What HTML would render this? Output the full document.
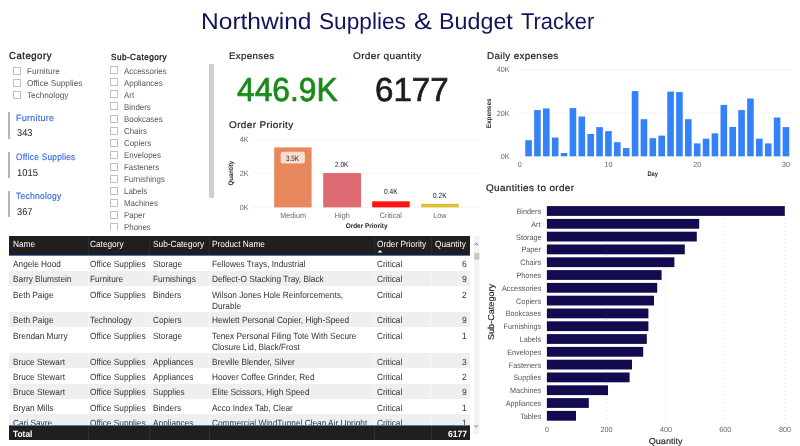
<!DOCTYPE html>
<html lang="en"><head><meta charset="utf-8"><title>Northwind Supplies &amp; Budget Tracker</title>
<style>
html,body{margin:0;padding:0;background:#fff}
body{font-family:"Liberation Sans",sans-serif;text-rendering:geometricPrecision}
#page{filter:blur(0.3px);position:relative;width:800px;height:446px;overflow:hidden;background:#fff}
.t{position:absolute;white-space:pre;line-height:1;transform-origin:0 0;margin:0;font-weight:400}
h1,h2,h3{margin:0;font-weight:400;font-size:inherit}
.cb{position:absolute;width:6px;height:6px;border:1px solid #c2c0be;background:#fff;box-sizing:content-box}
.m{-webkit-text-stroke:0.2px currentColor}
.b{-webkit-text-stroke:0.35px currentColor}
.big{-webkit-text-stroke:0.7px currentColor}
.bar{position:absolute;width:1.6px;background:#b7b4b1}
.clip{position:absolute;overflow:hidden}
svg{position:absolute;left:0;top:0;overflow:visible}
svg text{font-family:"Liberation Sans",sans-serif;text-rendering:geometricPrecision}
.row{position:absolute;left:9px;width:461px}
.alt{background:#efefef}
</style></head><body><div id="page">
<h1><span class="t" style="left:201.13px;top:10px;font-size:23px;transform:scaleX(1.0673);color:#14145a">Northwind</span> <span class="t" style="left:318.52px;top:10px;font-size:23px;transform:scaleX(0.9847);color:#14145a">Supplies</span> <span class="t" style="left:414.20px;top:10px;font-size:23px;transform:scaleX(1.1667);color:#14145a">&amp;</span> <span class="t" style="left:438.69px;top:10px;font-size:23px;transform:scaleX(1.0123);color:#14145a">Budget</span> <span class="t" style="left:521.00px;top:10px;font-size:23px;transform:scaleX(0.9504);color:#14145a">Tracker</span></h1>
<section class="slicer"><span class="t b" style="left:8.60px;top:52px;font-size:10px;transform:scaleX(0.9544);letter-spacing:0.55px;color:#252423">Category</span><i class="cb" style="left:13.3px;top:66.70px"></i><span class="t" style="left:27.00px;top:67px;font-size:8.5px;transform:scaleX(0.9654);color:#575553">Furniture</span>
<i class="cb" style="left:13.3px;top:78.70px"></i><span class="t" style="left:27.00px;top:79px;font-size:8.5px;transform:scaleX(0.9707);color:#575553">Office Supplies</span>
<i class="cb" style="left:13.3px;top:90.70px"></i><span class="t" style="left:27.00px;top:91px;font-size:8.5px;transform:scaleX(0.9622);color:#575553">Technology</span>
</section>
<section class="cards"><i class="bar" style="left:8.1px;top:112.4px;height:26.4px"></i><span class="t m" style="left:16.30px;top:114px;font-size:9.2px;transform:scaleX(0.9705);letter-spacing:0.3px;color:#3b6fe3">Furniture</span> <span class="t" style="left:16.50px;top:129px;font-size:10px;transform:scaleX(0.9227);color:#252423">343</span>
<i class="bar" style="left:8.1px;top:151.7px;height:26.4px"></i><span class="t m" style="left:16.30px;top:153px;font-size:9.2px;transform:scaleX(0.8999);letter-spacing:0.3px;color:#3b6fe3">Office Supplies</span> <span class="t" style="left:16.50px;top:169px;font-size:10px;transform:scaleX(0.9434);color:#252423">1015</span>
<i class="bar" style="left:8.1px;top:190.9px;height:26.4px"></i><span class="t m" style="left:16.30px;top:192px;font-size:9.2px;transform:scaleX(0.9196);letter-spacing:0.3px;color:#3b6fe3">Technology</span> <span class="t" style="left:16.50px;top:208px;font-size:10px;transform:scaleX(0.9227);color:#252423">367</span>
</section>
<section class="slicer"><span class="t b" style="left:110.80px;top:53px;font-size:8.8px;transform:scaleX(0.9292);letter-spacing:0.5px;color:#252423">Sub-Category</span><div class="clip" style="left:100px;top:62px;width:108px;height:167.6px"><div style="position:absolute;left:-100px;top:-62px"><i class="cb" style="left:110.2px;top:66.40px"></i><span class="t" style="left:124.20px;top:67px;font-size:8.5px;transform:scaleX(0.9300);color:#575553">Accessories</span>
<i class="cb" style="left:110.2px;top:78.43px"></i><span class="t" style="left:124.20px;top:79px;font-size:8.5px;transform:scaleX(0.9300);color:#575553">Appliances</span>
<i class="cb" style="left:110.2px;top:90.46px"></i><span class="t" style="left:124.20px;top:91px;font-size:8.5px;transform:scaleX(0.9300);color:#575553">Art</span>
<i class="cb" style="left:110.2px;top:102.49px"></i><span class="t" style="left:124.20px;top:103px;font-size:8.5px;transform:scaleX(0.9300);color:#575553">Binders</span>
<i class="cb" style="left:110.2px;top:114.52px"></i><span class="t" style="left:124.20px;top:115px;font-size:8.5px;transform:scaleX(0.9300);color:#575553">Bookcases</span>
<i class="cb" style="left:110.2px;top:126.55px"></i><span class="t" style="left:124.20px;top:127px;font-size:8.5px;transform:scaleX(0.9300);color:#575553">Chairs</span>
<i class="cb" style="left:110.2px;top:138.58px"></i><span class="t" style="left:124.20px;top:139px;font-size:8.5px;transform:scaleX(0.9300);color:#575553">Copiers</span>
<i class="cb" style="left:110.2px;top:150.61px"></i><span class="t" style="left:124.20px;top:151px;font-size:8.5px;transform:scaleX(0.9300);color:#575553">Envelopes</span>
<i class="cb" style="left:110.2px;top:162.64px"></i><span class="t" style="left:124.20px;top:163px;font-size:8.5px;transform:scaleX(0.9300);color:#575553">Fasteners</span>
<i class="cb" style="left:110.2px;top:174.67px"></i><span class="t" style="left:124.20px;top:175px;font-size:8.5px;transform:scaleX(0.9300);color:#575553">Furnishings</span>
<i class="cb" style="left:110.2px;top:186.70px"></i><span class="t" style="left:124.20px;top:187px;font-size:8.5px;transform:scaleX(0.9300);color:#575553">Labels</span>
<i class="cb" style="left:110.2px;top:198.73px"></i><span class="t" style="left:124.20px;top:199px;font-size:8.5px;transform:scaleX(0.9300);color:#575553">Machines</span>
<i class="cb" style="left:110.2px;top:210.76px"></i><span class="t" style="left:124.20px;top:211px;font-size:8.5px;transform:scaleX(0.9300);color:#575553">Paper</span>
<i class="cb" style="left:110.2px;top:222.79px"></i><span class="t" style="left:124.20px;top:223px;font-size:8.5px;transform:scaleX(0.9300);color:#575553">Phones</span>
</div></div><i style="position:absolute;left:209.2px;top:63.5px;width:4.5px;height:134px;background:#d2d0ce"></i></section>
<section class="kpi"><span class="t m" style="left:228.70px;top:52px;font-size:9.5px;transform:scaleX(1.0221);letter-spacing:0.35px;color:#252423">Expenses</span>
<span class="t big" style="left:237.40px;top:74px;font-size:33.2px;transform:scaleX(0.9567);color:#188a18">446.9K</span>
<span class="t m" style="left:352.80px;top:52px;font-size:9.5px;transform:scaleX(1.0524);letter-spacing:0.35px;color:#252423">Order quantity</span>
<span class="t big" style="left:375.20px;top:74px;font-size:33.2px;transform:scaleX(0.9976);color:#1c1c1c">6177</span>
<span class="t m" style="left:228.70px;top:121px;font-size:9.7px;transform:scaleX(1.0321);letter-spacing:0.35px;color:#252423">Order Priority</span>
<span class="t m" style="left:486.50px;top:52px;font-size:9.7px;transform:scaleX(1.0128);letter-spacing:0.35px;color:#252423">Daily expenses</span>
<span class="t m" style="left:486.00px;top:184px;font-size:9.7px;transform:scaleX(1.0234);letter-spacing:0.35px;color:#252423">Quantities to order</span></section>
<svg width="800" height="446" viewBox="0 0 800 446">
<g class="order-priority">
<line x1="253.8" x2="480" y1="139.4" y2="139.4" stroke="#d4d4d4" stroke-width="0.9" stroke-dasharray="0.9 3.1"/>
<line x1="253.8" x2="480" y1="173.2" y2="173.2" stroke="#d4d4d4" stroke-width="0.9" stroke-dasharray="0.9 3.1"/>
<line x1="253.8" x2="480" y1="207.3" y2="207.3" stroke="#d4d4d4" stroke-width="0.9" stroke-dasharray="0.9 3.1"/>
<rect x="274.2" y="147.4" width="37.4" height="60.0" fill="#e8875c"/>
<rect x="323.2" y="173.0" width="37.8" height="34.4" fill="#de6a73"/>
<rect x="372.2" y="201.3" width="37.5" height="6.1" fill="#fd1414"/>
<rect x="421.2" y="203.8" width="37.6" height="3.6" fill="#dfc233"/>
<rect x="280.7" y="151.8" width="24.2" height="11.7" rx="2" fill="#fff" fill-opacity="0.72"/>
<text x="239.64" y="142" font-size="7.6" fill="#6a6866" textLength="8.82" lengthAdjust="spacingAndGlyphs">4K</text>
<text x="239.64" y="176" font-size="7.6" fill="#6a6866" textLength="8.82" lengthAdjust="spacingAndGlyphs">2K</text>
<text x="239.64" y="210" font-size="7.6" fill="#6a6866" textLength="8.82" lengthAdjust="spacingAndGlyphs">0K</text>
<text x="280.24" y="218" font-size="7.8" fill="#6a6866" textLength="25.79" lengthAdjust="spacingAndGlyphs">Medium</text>
<text x="334.80" y="218" font-size="7.8" fill="#6a6866" textLength="14.91" lengthAdjust="spacingAndGlyphs">High</text>
<text x="379.75" y="218" font-size="7.8" fill="#6a6866" textLength="22.16" lengthAdjust="spacingAndGlyphs">Critical</text>
<text x="433.18" y="218" font-size="7.8" fill="#6a6866" textLength="13.30" lengthAdjust="spacingAndGlyphs">Low</text>
<text x="286.00" y="161" font-size="7.7" fill="#252423" textLength="13.08" lengthAdjust="spacingAndGlyphs">3.5K</text>
<text x="335.10" y="167" font-size="7.7" fill="#252423" textLength="13.17" lengthAdjust="spacingAndGlyphs">2.0K</text>
<text x="384.00" y="194" font-size="7.7" fill="#252423" textLength="13.55" lengthAdjust="spacingAndGlyphs">0.4K</text>
<text x="433.10" y="198" font-size="7.7" fill="#252423" textLength="13.46" lengthAdjust="spacingAndGlyphs">0.2K</text>
<text x="345.70" y="228" font-size="6.8" fill="#252423" textLength="41.79" lengthAdjust="spacingAndGlyphs" font-weight="700">Order Priority</text>
<text transform="translate(233 185.50) rotate(-90)" font-size="6.6" fill="#252423" textLength="24.69" lengthAdjust="spacingAndGlyphs" font-weight="700">Quantity</text>
</g>
<g class="daily-expenses">
<line x1="516.6" x2="790" y1="69.9" y2="69.9" stroke="#d4d4d4" stroke-width="0.9" stroke-dasharray="0.9 3.1"/>
<line x1="516.6" x2="790" y1="113.0" y2="113.0" stroke="#d4d4d4" stroke-width="0.9" stroke-dasharray="0.9 3.1"/>
<line x1="516.6" x2="790" y1="156.3" y2="156.3" stroke="#d4d4d4" stroke-width="0.9" stroke-dasharray="0.9 3.1"/>
<rect x="525.25" y="140.2" width="6.6" height="16.1" fill="#3482f8"/>
<rect x="534.13" y="110.1" width="6.6" height="46.2" fill="#3482f8"/>
<rect x="543.00" y="108.4" width="6.6" height="47.9" fill="#3482f8"/>
<rect x="551.88" y="137.5" width="6.6" height="18.8" fill="#3482f8"/>
<rect x="560.75" y="153.0" width="6.6" height="3.3" fill="#3482f8"/>
<rect x="569.63" y="108.1" width="6.6" height="48.2" fill="#3482f8"/>
<rect x="578.51" y="116.5" width="6.6" height="39.8" fill="#3482f8"/>
<rect x="587.38" y="134.0" width="6.6" height="22.3" fill="#3482f8"/>
<rect x="596.26" y="127.1" width="6.6" height="29.2" fill="#3482f8"/>
<rect x="605.13" y="131.1" width="6.6" height="25.2" fill="#3482f8"/>
<rect x="614.01" y="142.2" width="6.6" height="14.1" fill="#3482f8"/>
<rect x="622.89" y="148.1" width="6.6" height="8.2" fill="#3482f8"/>
<rect x="631.76" y="91.1" width="6.6" height="65.2" fill="#3482f8"/>
<rect x="640.64" y="119.2" width="6.6" height="37.1" fill="#3482f8"/>
<rect x="649.51" y="138.2" width="6.6" height="18.1" fill="#3482f8"/>
<rect x="658.39" y="135.6" width="6.6" height="20.7" fill="#3482f8"/>
<rect x="667.27" y="91.6" width="6.6" height="64.7" fill="#3482f8"/>
<rect x="676.14" y="92.1" width="6.6" height="64.2" fill="#3482f8"/>
<rect x="685.02" y="119.2" width="6.6" height="37.1" fill="#3482f8"/>
<rect x="693.89" y="143.4" width="6.6" height="12.9" fill="#3482f8"/>
<rect x="702.77" y="138.7" width="6.6" height="17.6" fill="#3482f8"/>
<rect x="711.65" y="133.3" width="6.6" height="23.0" fill="#3482f8"/>
<rect x="720.52" y="104.9" width="6.6" height="51.4" fill="#3482f8"/>
<rect x="729.40" y="126.9" width="6.6" height="29.4" fill="#3482f8"/>
<rect x="738.27" y="110.1" width="6.6" height="46.2" fill="#3482f8"/>
<rect x="747.15" y="98.5" width="6.6" height="57.8" fill="#3482f8"/>
<rect x="756.03" y="138.7" width="6.6" height="17.6" fill="#3482f8"/>
<rect x="764.90" y="143.4" width="6.6" height="12.9" fill="#3482f8"/>
<rect x="773.78" y="117.5" width="6.6" height="38.8" fill="#3482f8"/>
<rect x="782.65" y="127.1" width="6.6" height="29.2" fill="#3482f8"/>
<text x="496.83" y="72" font-size="7.6" fill="#6a6866" textLength="12.84" lengthAdjust="spacingAndGlyphs">40K</text>
<text x="496.83" y="116" font-size="7.6" fill="#6a6866" textLength="12.84" lengthAdjust="spacingAndGlyphs">20K</text>
<text x="500.84" y="159" font-size="7.6" fill="#6a6866" textLength="8.82" lengthAdjust="spacingAndGlyphs">0K</text>
<text x="517.70" y="167" font-size="7.6" fill="#6a6866" textLength="4.01" lengthAdjust="spacingAndGlyphs">0</text>
<text x="604.49" y="167" font-size="7.6" fill="#6a6866" textLength="8.02" lengthAdjust="spacingAndGlyphs">10</text>
<text x="693.29" y="167" font-size="7.6" fill="#6a6866" textLength="8.02" lengthAdjust="spacingAndGlyphs">20</text>
<text x="782.09" y="167" font-size="7.6" fill="#6a6866" textLength="8.02" lengthAdjust="spacingAndGlyphs">30</text>
<text x="647.55" y="176" font-size="6.8" fill="#252423" textLength="10.32" lengthAdjust="spacingAndGlyphs" font-weight="700">Day</text>
<text transform="translate(491 128.20) rotate(-90)" font-size="6.6" fill="#252423" textLength="29.68" lengthAdjust="spacingAndGlyphs" font-weight="700">Expenses</text>
</g>
<g class="quantities">
<line x1="547" x2="547" y1="203" y2="424" stroke="#d4d4d4" stroke-width="0.9" stroke-dasharray="0.9 3.1"/>
<line x1="606.4" x2="606.4" y1="203" y2="424" stroke="#d4d4d4" stroke-width="0.9" stroke-dasharray="0.9 3.1"/>
<line x1="666" x2="666" y1="203" y2="424" stroke="#d4d4d4" stroke-width="0.9" stroke-dasharray="0.9 3.1"/>
<line x1="725.2" x2="725.2" y1="203" y2="424" stroke="#d4d4d4" stroke-width="0.9" stroke-dasharray="0.9 3.1"/>
<line x1="784.8" x2="784.8" y1="203" y2="424" stroke="#d4d4d4" stroke-width="0.9" stroke-dasharray="0.9 3.1"/>
<rect x="546.9" y="206.10" width="237.9" height="9.8" fill="#120b50"/>
<rect x="546.9" y="218.90" width="152.3" height="9.8" fill="#120b50"/>
<rect x="546.9" y="231.70" width="149.9" height="9.8" fill="#120b50"/>
<rect x="546.9" y="244.50" width="137.9" height="9.8" fill="#120b50"/>
<rect x="546.9" y="257.30" width="127.5" height="9.8" fill="#120b50"/>
<rect x="546.9" y="270.10" width="114.7" height="9.8" fill="#120b50"/>
<rect x="546.9" y="282.90" width="110.3" height="9.8" fill="#120b50"/>
<rect x="546.9" y="295.70" width="107.1" height="9.8" fill="#120b50"/>
<rect x="546.9" y="308.50" width="101.5" height="9.8" fill="#120b50"/>
<rect x="546.9" y="321.30" width="101.5" height="9.8" fill="#120b50"/>
<rect x="546.9" y="334.10" width="99.9" height="9.8" fill="#120b50"/>
<rect x="546.9" y="346.90" width="96.3" height="9.8" fill="#120b50"/>
<rect x="546.9" y="359.70" width="85.1" height="9.8" fill="#120b50"/>
<rect x="546.9" y="372.50" width="82.7" height="9.8" fill="#120b50"/>
<rect x="546.9" y="385.30" width="61.1" height="9.8" fill="#120b50"/>
<rect x="546.9" y="398.10" width="41.9" height="9.8" fill="#120b50"/>
<rect x="546.9" y="410.90" width="29.1" height="9.8" fill="#120b50"/>
<text x="516.52" y="214" font-size="7.8" fill="#575553" textLength="24.59" lengthAdjust="spacingAndGlyphs">Binders</text>
<text x="531.16" y="227" font-size="7.8" fill="#575553" textLength="9.27" lengthAdjust="spacingAndGlyphs">Art</text>
<text x="516.12" y="240" font-size="7.8" fill="#575553" textLength="25.40" lengthAdjust="spacingAndGlyphs">Storage</text>
<text x="521.48" y="252" font-size="7.8" fill="#575553" textLength="19.35" lengthAdjust="spacingAndGlyphs">Paper</text>
<text x="520.15" y="265" font-size="7.8" fill="#575553" textLength="20.95" lengthAdjust="spacingAndGlyphs">Chairs</text>
<text x="516.51" y="278" font-size="7.8" fill="#575553" textLength="24.59" lengthAdjust="spacingAndGlyphs">Phones</text>
<text x="502.02" y="291" font-size="7.8" fill="#575553" textLength="39.09" lengthAdjust="spacingAndGlyphs">Accessories</text>
<text x="516.12" y="304" font-size="7.8" fill="#575553" textLength="24.99" lengthAdjust="spacingAndGlyphs">Copiers</text>
<text x="505.64" y="316" font-size="7.8" fill="#575553" textLength="35.47" lengthAdjust="spacingAndGlyphs">Bookcases</text>
<text x="503.62" y="329" font-size="7.8" fill="#575553" textLength="37.48" lengthAdjust="spacingAndGlyphs">Furnishings</text>
<text x="519.74" y="342" font-size="7.8" fill="#575553" textLength="21.37" lengthAdjust="spacingAndGlyphs">Labels</text>
<text x="507.24" y="355" font-size="7.8" fill="#575553" textLength="33.86" lengthAdjust="spacingAndGlyphs">Envelopes</text>
<text x="508.87" y="368" font-size="7.8" fill="#575553" textLength="32.24" lengthAdjust="spacingAndGlyphs">Fasteners</text>
<text x="513.29" y="380" font-size="7.8" fill="#575553" textLength="27.81" lengthAdjust="spacingAndGlyphs">Supplies</text>
<text x="510.07" y="393" font-size="7.8" fill="#575553" textLength="31.03" lengthAdjust="spacingAndGlyphs">Machines</text>
<text x="505.63" y="406" font-size="7.8" fill="#575553" textLength="35.47" lengthAdjust="spacingAndGlyphs">Appliances</text>
<text x="520.15" y="419" font-size="7.8" fill="#575553" textLength="20.96" lengthAdjust="spacingAndGlyphs">Tables</text>
<text x="545.10" y="432" font-size="7.6" fill="#6a6866" textLength="4.01" lengthAdjust="spacingAndGlyphs">0</text>
<text x="600.49" y="432" font-size="7.6" fill="#6a6866" textLength="12.04" lengthAdjust="spacingAndGlyphs">200</text>
<text x="660.09" y="432" font-size="7.6" fill="#6a6866" textLength="12.04" lengthAdjust="spacingAndGlyphs">400</text>
<text x="719.29" y="432" font-size="7.6" fill="#6a6866" textLength="12.04" lengthAdjust="spacingAndGlyphs">600</text>
<text x="778.89" y="432" font-size="7.6" fill="#6a6866" textLength="12.04" lengthAdjust="spacingAndGlyphs">800</text>
<text x="648.75" y="444" font-size="8.6" fill="#252423" textLength="33.76" lengthAdjust="spacingAndGlyphs" stroke="#252423" stroke-width="0.15">Quantity</text>
<text transform="translate(494 340.10) rotate(-90)" font-size="8.6" fill="#252423" textLength="56.25" lengthAdjust="spacingAndGlyphs" stroke="#252423" stroke-width="0.15">Sub-Category</text>
</g>
</svg>
<section class="table"><div class="clip" style="left:9px;top:255px;width:461px;height:169.8px"><div style="position:absolute;left:-9px;top:-255px"><div class="tr"><div class="row" style="top:255.50px;height:15.3px"></div><span class="t" style="left:12.60px;top:260px;font-size:9px;transform:scaleX(0.9200);color:#333333">Angele Hood</span> <span class="t" style="left:90.40px;top:260px;font-size:9px;transform:scaleX(0.9200);color:#333333">Office Supplies</span> <span class="t" style="left:152.60px;top:260px;font-size:9px;transform:scaleX(0.9200);color:#333333">Storage</span> <span class="t" style="left:211.60px;top:260px;font-size:9px;transform:scaleX(0.9200);color:#333333">Fellowes Trays, Industrial</span> <span class="t" style="left:377.00px;top:260px;font-size:9px;transform:scaleX(0.9200);color:#333333">Critical</span> <span class="t" style="left:462.25px;top:260px;font-size:9px;transform:scaleX(0.9500);color:#333333">6</span></div>
<div class="tr"><div class="row alt" style="top:270.80px;height:15.3px"></div><span class="t" style="left:12.60px;top:275px;font-size:9px;transform:scaleX(0.9200);color:#333333">Barry Blumstein</span> <span class="t" style="left:90.40px;top:275px;font-size:9px;transform:scaleX(0.9200);color:#333333">Furniture</span> <span class="t" style="left:152.60px;top:275px;font-size:9px;transform:scaleX(0.9200);color:#333333">Furnishings</span> <span class="t" style="left:211.60px;top:275px;font-size:9px;transform:scaleX(0.9200);color:#333333">Deflect-O Stacking Tray, Black</span> <span class="t" style="left:377.00px;top:275px;font-size:9px;transform:scaleX(0.9200);color:#333333">Critical</span> <span class="t" style="left:462.25px;top:275px;font-size:9px;transform:scaleX(0.9500);color:#333333">9</span></div>
<div class="tr"><div class="row" style="top:286.10px;height:25.85px"></div><span class="t" style="left:12.60px;top:291px;font-size:9px;transform:scaleX(0.9200);color:#333333">Beth Paige</span> <span class="t" style="left:90.40px;top:291px;font-size:9px;transform:scaleX(0.9200);color:#333333">Office Supplies</span> <span class="t" style="left:152.60px;top:291px;font-size:9px;transform:scaleX(0.9200);color:#333333">Binders</span> <span class="t" style="left:211.60px;top:291px;font-size:9px;transform:scaleX(0.9200);color:#333333">Wilson Jones Hole Reinforcements,</span> <span class="t" style="left:211.60px;top:302px;font-size:9px;transform:scaleX(0.9200);color:#333333">Durable</span> <span class="t" style="left:377.00px;top:291px;font-size:9px;transform:scaleX(0.9200);color:#333333">Critical</span> <span class="t" style="left:462.25px;top:291px;font-size:9px;transform:scaleX(0.9500);color:#333333">2</span></div>
<div class="tr"><div class="row alt" style="top:311.95px;height:15.3px"></div><span class="t" style="left:12.60px;top:316px;font-size:9px;transform:scaleX(0.9200);color:#333333">Beth Paige</span> <span class="t" style="left:90.40px;top:316px;font-size:9px;transform:scaleX(0.9200);color:#333333">Technology</span> <span class="t" style="left:152.60px;top:316px;font-size:9px;transform:scaleX(0.9200);color:#333333">Copiers</span> <span class="t" style="left:211.60px;top:316px;font-size:9px;transform:scaleX(0.9200);color:#333333">Hewlett Personal Copier, High-Speed</span> <span class="t" style="left:377.00px;top:316px;font-size:9px;transform:scaleX(0.9200);color:#333333">Critical</span> <span class="t" style="left:462.25px;top:316px;font-size:9px;transform:scaleX(0.9500);color:#333333">9</span></div>
<div class="tr"><div class="row" style="top:327.25px;height:25.85px"></div><span class="t" style="left:12.60px;top:332px;font-size:9px;transform:scaleX(0.9200);color:#333333">Brendan Murry</span> <span class="t" style="left:90.40px;top:332px;font-size:9px;transform:scaleX(0.9200);color:#333333">Office Supplies</span> <span class="t" style="left:152.60px;top:332px;font-size:9px;transform:scaleX(0.9200);color:#333333">Storage</span> <span class="t" style="left:211.60px;top:332px;font-size:9px;transform:scaleX(0.9200);color:#333333">Tenex Personal Filing Tote With Secure</span> <span class="t" style="left:211.60px;top:343px;font-size:9px;transform:scaleX(0.9200);color:#333333">Closure Lid, Black/Frost</span> <span class="t" style="left:377.00px;top:332px;font-size:9px;transform:scaleX(0.9200);color:#333333">Critical</span> <span class="t" style="left:462.25px;top:332px;font-size:9px;transform:scaleX(0.9500);color:#333333">1</span></div>
<div class="tr"><div class="row alt" style="top:353.10px;height:15.3px"></div><span class="t" style="left:12.60px;top:358px;font-size:9px;transform:scaleX(0.9200);color:#333333">Bruce Stewart</span> <span class="t" style="left:90.40px;top:358px;font-size:9px;transform:scaleX(0.9200);color:#333333">Office Supplies</span> <span class="t" style="left:152.60px;top:358px;font-size:9px;transform:scaleX(0.9200);color:#333333">Appliances</span> <span class="t" style="left:211.60px;top:358px;font-size:9px;transform:scaleX(0.9200);color:#333333">Breville Blender, Silver</span> <span class="t" style="left:377.00px;top:358px;font-size:9px;transform:scaleX(0.9200);color:#333333">Critical</span> <span class="t" style="left:462.25px;top:358px;font-size:9px;transform:scaleX(0.9500);color:#333333">3</span></div>
<div class="tr"><div class="row" style="top:368.40px;height:15.3px"></div><span class="t" style="left:12.60px;top:373px;font-size:9px;transform:scaleX(0.9200);color:#333333">Bruce Stewart</span> <span class="t" style="left:90.40px;top:373px;font-size:9px;transform:scaleX(0.9200);color:#333333">Office Supplies</span> <span class="t" style="left:152.60px;top:373px;font-size:9px;transform:scaleX(0.9200);color:#333333">Appliances</span> <span class="t" style="left:211.60px;top:373px;font-size:9px;transform:scaleX(0.9200);color:#333333">Hoover Coffee Grinder, Red</span> <span class="t" style="left:377.00px;top:373px;font-size:9px;transform:scaleX(0.9200);color:#333333">Critical</span> <span class="t" style="left:462.25px;top:373px;font-size:9px;transform:scaleX(0.9500);color:#333333">2</span></div>
<div class="tr"><div class="row alt" style="top:383.70px;height:15.3px"></div><span class="t" style="left:12.60px;top:388px;font-size:9px;transform:scaleX(0.9200);color:#333333">Bruce Stewart</span> <span class="t" style="left:90.40px;top:388px;font-size:9px;transform:scaleX(0.9200);color:#333333">Office Supplies</span> <span class="t" style="left:152.60px;top:388px;font-size:9px;transform:scaleX(0.9200);color:#333333">Supplies</span> <span class="t" style="left:211.60px;top:388px;font-size:9px;transform:scaleX(0.9200);color:#333333">Elite Scissors, High Speed</span> <span class="t" style="left:377.00px;top:388px;font-size:9px;transform:scaleX(0.9200);color:#333333">Critical</span> <span class="t" style="left:462.25px;top:388px;font-size:9px;transform:scaleX(0.9500);color:#333333">9</span></div>
<div class="tr"><div class="row" style="top:399.00px;height:15.3px"></div><span class="t" style="left:12.60px;top:404px;font-size:9px;transform:scaleX(0.9200);color:#333333">Bryan Mills</span> <span class="t" style="left:90.40px;top:404px;font-size:9px;transform:scaleX(0.9200);color:#333333">Office Supplies</span> <span class="t" style="left:152.60px;top:404px;font-size:9px;transform:scaleX(0.9200);color:#333333">Binders</span> <span class="t" style="left:211.60px;top:404px;font-size:9px;transform:scaleX(0.9200);color:#333333">Acco Index Tab, Clear</span> <span class="t" style="left:377.00px;top:404px;font-size:9px;transform:scaleX(0.9200);color:#333333">Critical</span> <span class="t" style="left:462.25px;top:404px;font-size:9px;transform:scaleX(0.9500);color:#333333">1</span></div>
<div class="tr"><div class="row alt" style="top:414.30px;height:15.3px"></div><span class="t" style="left:12.60px;top:419px;font-size:9px;transform:scaleX(0.9200);color:#333333">Cari Sayre</span> <span class="t" style="left:90.40px;top:419px;font-size:9px;transform:scaleX(0.9200);color:#333333">Office Supplies</span> <span class="t" style="left:152.60px;top:419px;font-size:9px;transform:scaleX(0.9200);color:#333333">Appliances</span> <span class="t" style="left:211.60px;top:419px;font-size:9px;transform:scaleX(0.9200);color:#333333">Commercial WindTunnel Clean Air Upright</span> <span class="t" style="left:377.00px;top:419px;font-size:9px;transform:scaleX(0.9200);color:#333333">Critical</span> <span class="t" style="left:462.25px;top:419px;font-size:9px;transform:scaleX(0.9500);color:#333333">1</span></div>
<i style="position:absolute;left:87.6px;top:255px;width:1px;height:170px;background:rgba(255,255,255,.4)"></i><i style="position:absolute;left:149.2px;top:255px;width:1px;height:170px;background:rgba(255,255,255,.4)"></i><i style="position:absolute;left:208.8px;top:255px;width:1px;height:170px;background:rgba(255,255,255,.4)"></i><i style="position:absolute;left:373.8px;top:255px;width:1px;height:170px;background:rgba(255,255,255,.4)"></i><i style="position:absolute;left:430.5px;top:255px;width:1px;height:170px;background:rgba(255,255,255,.4)"></i></div></div><div style="position:absolute;left:9px;top:236px;width:461px;height:18.6px;background:#201f1e;border-bottom:0.9px solid #4a78c0"></div><i style="position:absolute;left:87.6px;top:236px;width:1px;height:18.6px;background:#262c38"></i><i style="position:absolute;left:149.2px;top:236px;width:1px;height:18.6px;background:#262c38"></i><i style="position:absolute;left:208.8px;top:236px;width:1px;height:18.6px;background:#262c38"></i><i style="position:absolute;left:373.8px;top:236px;width:1px;height:18.6px;background:#262c38"></i><i style="position:absolute;left:430.5px;top:236px;width:1px;height:18.6px;background:#262c38"></i><div class="thead"><span class="t" style="left:12.60px;top:240px;font-size:9px;transform:scaleX(0.9200);color:#fff">Name</span> <span class="t" style="left:90.40px;top:240px;font-size:9px;transform:scaleX(0.9200);color:#fff">Category</span> <span class="t" style="left:152.60px;top:240px;font-size:9px;transform:scaleX(0.9200);color:#fff">Sub-Category</span> <span class="t" style="left:211.60px;top:240px;font-size:9px;transform:scaleX(0.9200);color:#fff">Product Name</span> <span class="t" style="left:377.00px;top:240px;font-size:9px;transform:scaleX(0.9200);color:#fff">Order Priority</span> <span class="t" style="left:434.90px;top:240px;font-size:9px;transform:scaleX(0.9200);color:#fff">Quantity</span></div>
<svg width="800" height="446" viewBox="0 0 800 446"><path d="M377.6 252.6 L380 250 L382.4 252.6 Z" fill="#fff"/><rect x="473.8" y="236" width="5.6" height="198" fill="#f2f2f2"/><rect x="474.3" y="253" width="5" height="6.6" fill="#c6c6c6"/><path d="M474.6 245.2 L476.3 243.2 L478 245.2" stroke="#555" stroke-width="0.8" fill="none"/><path d="M474.6 425.2 L476.3 427.2 L478 425.2" stroke="#555" stroke-width="0.8" fill="none"/></svg><div style="position:absolute;left:9px;top:424.6px;width:461px;height:15.2px;background:#201f1e;border-top:0.9px solid #4a78c0;box-sizing:border-box"></div><i style="position:absolute;left:87.6px;top:425.5px;width:1px;height:14.3px;background:#28303e"></i><i style="position:absolute;left:149.2px;top:425.5px;width:1px;height:14.3px;background:#28303e"></i><i style="position:absolute;left:208.8px;top:425.5px;width:1px;height:14.3px;background:#28303e"></i><i style="position:absolute;left:373.8px;top:425.5px;width:1px;height:14.3px;background:#28303e"></i><i style="position:absolute;left:430.5px;top:425.5px;width:1px;height:14.3px;background:#28303e"></i><div class="tfoot"><span class="t" style="left:12.60px;top:430px;font-size:9px;transform:scaleX(0.9300);font-weight:700;color:#fff">Total</span> <span class="t" style="left:447.98px;top:430px;font-size:9px;transform:scaleX(0.9500);font-weight:700;color:#fff">6177</span></div>
</section>
</div></body></html>
